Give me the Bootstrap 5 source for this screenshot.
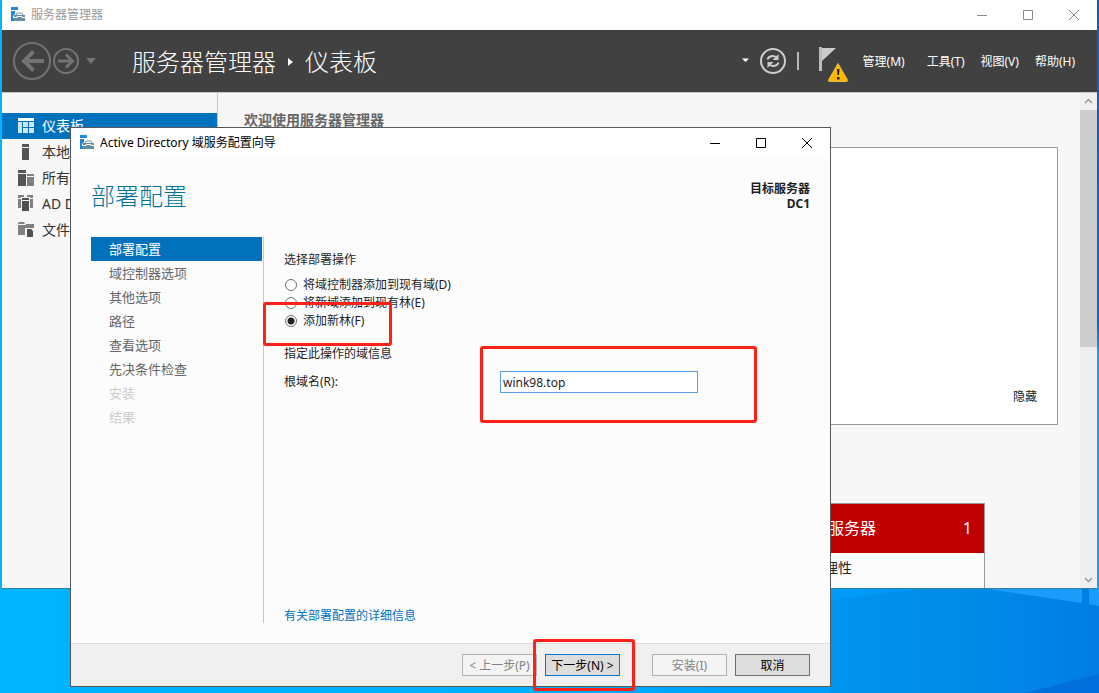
<!DOCTYPE html>
<html lang="zh-CN">
<head>
<meta charset="utf-8">
<meta name="viewport" content="width=device-width, initial-scale=1">
<title>服务器管理器</title>
<link href="https://cdn.jsdelivr.net/npm/bootstrap@5.3.0/dist/css/bootstrap.min.css" rel="stylesheet">
<style>
  body { font-family: "Noto Sans", "Noto Sans CJK SC", sans-serif; font-size: 12px; line-height: 18px; color: #222; }
  button, input { font: inherit; color: inherit; }
  svg { display: block; flex: none; }
  .desktop { height: 100vh; min-height: 693px; background: #00b4ff; }
  .wallpaper { position: absolute; inset: 0; width: 100%; height: 100%; }

  /* windows */
  .win-main { position: absolute; top: 0; left: 2px; right: 2px; bottom: 104px; background: #f7f7f7; border-bottom: 1px solid #2f7ea8; }
  .win-dialog { position: absolute; top: 127px; left: 70px; width: 761px; background: #fcfcfc; border: 1px solid #53585c; color: #1e1e1e; }
  .titlebar { height: 30px; background: #fff; padding-left: 8px; }
  .titlebar > span { padding-left: 5px; }
  .win-main .titlebar { color: #999; }
  .win-btn { width: 46px; height: 28px; border: 0; background: none; padding: 0; display: flex; align-items: center; justify-content: center; }

  /* header strip */
  .topstrip { height: 63px; background: #414141; color: #fff; border-bottom: 1px solid #c8c8c8; padding-left: 10px; padding-right: 22px; }
  .crumbs { font-size: 24px; font-weight: 300; line-height: 36px; margin-left: 34px; padding-top: 2px; gap: 12px; }
  .plain-btn { border: 0; background: none; padding: 0; }
  .topmenu { gap: 16px; margin-left: 13px; padding-top: 3px; }
  .topmenu .wide-gap { margin-right: 6px; }

  /* main window body */
  .sidebar { width: 216px; border-right: 1px solid #c9c9c9; padding-top: 20px; font-size: 14px; }
  .sidebar a { height: 26px; padding-left: 15px; gap: 8px; color: #333; text-decoration: none; display: flex; align-items: center; white-space: nowrap; overflow: hidden; }
  .sidebar a.active { background: #0072bc; color: #fff; }
  .dash { padding: 18px 22px 0 26px; }
  .dash h2 { font-size: 14px; line-height: 18px; font-weight: 700; color: #666; margin: 0 0 18px; }
  .welcome { height: 278px; background: #fff; border: 1px solid #999; padding: 0 20px 18px; margin-bottom: 78px; }
  .tile { width: 240px; margin-right: 73px; background: #fcfcfc; border: 1px solid #999; border-bottom: 0; }
  .tile-head { height: 49px; background: #c00000; color: #fff; font-size: 16px; padding: 0 12px 0 50px; }
  .tile-row { height: 36px; font-size: 14px; padding: 6px 50px 0; }
  .scrollrail { width: 17px; background: #efefef; }
  .scrollthumb { height: 237px; background: #cdcdcd; }
  .arrow-btn { width: 17px; height: 17px; border: 0; padding: 0; background: none; display: flex; align-items: center; justify-content: center; }

  /* wizard */
  .wiz-head { height: 79px; padding: 20px 20px 0; }
  .wiz-head h1 { font-size: 24px; line-height: 36px; font-weight: 300; color: #007298; margin: 0; }
  .target { font-weight: 700; line-height: 15px; padding-top: 3px; }
  .wiz-body { min-height: 386px; padding: 0 20px; margin-bottom: 20px; }
  .steps { width: 173px; border-right: 1px solid #c8c8c8; padding-right: 1px; font-size: 13px; }
  .steps a { height: 24px; line-height: 24px; padding-left: 18px; color: #666; text-decoration: none; display: block; }
  .steps a.active { background: #0072bc; color: #fff; }
  .steps a.off { color: #ccc; }
  .pane { padding: 14px 0 0 20px; }
  .opts { padding: 7px 0 15px; }
  .opt { height: 18px; gap: 5px; }
  .opt input { appearance: none; width: 12px; height: 12px; margin: 0 1px; border: 1px solid #707070; border-radius: 50%; background: #fff; }
  .opt input:checked { background: radial-gradient(circle, #222 3px, #fff 4px); }
  .field-row { padding-top: 8px; }
  .field-name { width: 216px; }
  .text-in { width: 198px; height: 22px; border: 1px solid #569de5; background: #fff; padding: 0 2px; outline: 0; border-radius: 0; }
  .more-row { line-height: 15px; }
  .more { color: #0070c0; text-decoration: none; }
  .wiz-foot { height: 43px; background: #f0f0f0; border-top: 1px solid #dcdcdc; padding: 0 20px; gap: 8px; }
  .cmd { width: 75px; height: 22px; line-height: 18px; padding: 2px 0 0; border: 1px solid #707070; background: #ddd; color: #000; white-space: nowrap; }
  .cmd:disabled { border-color: #adb2b5; background: #f4f4f4; color: #838383; }
  .cmd.main-cmd { border-color: #0078d7; }

  /* red callout frames */
  .callout-box { position: absolute; border: 3px solid #ff2116; border-radius: 3px; pointer-events: none; }
  .on-forest { left: -21px; top: -10px; width: 129px; height: 44px; }
  .on-domain { left: -20px; top: -25px; width: 277px; height: 77px; }
  .on-next { left: -12px; top: -15px; width: 102px; height: 52px; }
</style>
</head>
<body>
<div class="desktop position-relative overflow-hidden">
  <svg class="wallpaper" viewBox="0 0 1099 693" preserveAspectRatio="none" aria-hidden="true">
    <defs>
      <linearGradient id="sky" x1="0" x2="1" y1="0" y2="0"><stop offset="0" stop-color="#00b4ff"/><stop offset=".5" stop-color="#00b0fd"/><stop offset=".76" stop-color="#009cf8"/><stop offset="1" stop-color="#0088ee"/></linearGradient>
      <linearGradient id="edge" x1="0" x2="0" y1="0" y2="1"><stop offset="0" stop-color="#0a5fce"/><stop offset=".55" stop-color="#0068d8"/><stop offset=".6" stop-color="#1a9cf8"/><stop offset="1" stop-color="#1a9cf8"/></linearGradient>
      <linearGradient id="beam" x1="0" x2="1" y1="0" y2="0"><stop offset="0" stop-color="#0095ef"/><stop offset=".6" stop-color="#0089e8"/><stop offset="1" stop-color="#007ce2"/></linearGradient>
    </defs>
    <rect width="1099" height="693" fill="url(#sky)"/>
    <rect x="1090" width="9" height="589" fill="url(#edge)"/>
    <path d="M831 600L920 589H1099V693H831Z" fill="url(#beam)"/>
    <path d="M980 588H1082V603ZM1089 588H1099V606L1089 604Z" fill="#1c9cfa"/>
    <path d="M1025 693L1099 674V693Z" fill="#006fdc"/>
  </svg>

  <main class="win-main d-flex flex-column">
    <header class="titlebar d-flex align-items-center">
      <svg width="16" height="16" viewBox="0 0 16 16"><path d="M1 0h7v3H1zM1 4h4v10H1z" fill="#1d87d8"/><path d="M3 9l4-4h6l3 4v2H3z" fill="#fff"/><path d="M4 8h11v6H4z" fill="#688ba0"/><path d="M6 8l1-2h5l1 2" fill="none" stroke="#7698aa"/><path d="M4 10.500h3v-1h5v1h3" fill="none" stroke="#fff"/></svg>
      <span class="flex-grow-1">服务器管理器</span>
      <button class="win-btn" aria-label="最小化"><svg width="10" height="10"><path d="M0 5.500h10" stroke="#888"/></svg></button>
      <button class="win-btn" aria-label="最大化"><svg width="10" height="10"><path d="M.5.5h9v9h-9z" fill="none" stroke="#888"/></svg></button>
      <button class="win-btn" aria-label="关闭"><svg width="10" height="10"><path d="M0 0l10 10M10 0L0 10" stroke="#888"/></svg></button>
    </header>

    <div class="topstrip d-flex align-items-center">
      <button class="plain-btn" aria-label="后退"><svg width="40" height="40" viewBox="0 0 40 40" fill="none" stroke="#737373"><circle cx="20" cy="20" r="18" stroke-width="2"/><path d="M32 20H12" stroke-width="4"/><path d="M21.500 10.500L12 20l9.500 9.500" stroke-width="4"/></svg></button>
      <button class="plain-btn" aria-label="前进"><svg width="30" height="30" viewBox="0 0 30 30" fill="none" stroke="#737373"><circle cx="14" cy="15" r="12" stroke-width="2"/><path d="M6 15h14" stroke-width="3"/><path d="M14 8.500L20.500 15l-6.500 6.500" stroke-width="3"/></svg></button>
      <button class="plain-btn ms-1" aria-label="历史记录"><svg width="12" height="8"><path d="M0 1h10L5 7z" fill="#737373"/></svg></button>
      <div class="crumbs d-flex align-items-center flex-grow-1">
        <span>服务器管理器</span>
        <svg width="5" height="8"><path d="M0 0l5 4-5 4z" fill="#fff"/></svg>
        <span>仪表板</span>
      </div>
      <button class="plain-btn" aria-label="刷新选项"><svg width="8" height="5"><path d="M0 .5h7L3.500 4z" fill="#fff"/></svg></button>
      <button class="plain-btn ms-2" aria-label="刷新"><svg width="30" height="30" viewBox="0 0 30 30" fill="none" stroke="#ccc"><circle cx="15" cy="15" r="12" stroke-width="2"/><g stroke-width="2"><path d="M9.500 13.500c1-3.500 6-4.500 9-2"/><path d="M20.500 16.500c-1 3.500-6 4.500-9 2"/></g><path d="M20.500 8v6h-6zM9.500 22v-6h6z" fill="#ccc" stroke="none"/></svg></button>
      <svg class="ms-2" width="4" height="20"><path d="M2 1v18" stroke="#b8b8b8" stroke-width="2"/></svg>
      <button class="plain-btn ms-3 pt-1" aria-label="通知"><svg width="34" height="38" viewBox="0 0 34 38"><path d="M3 3h3v24H3z" fill="#bbb"/><path d="M6 4h14L6 17z" fill="#ccc"/><path d="M22 19.500L31.500 36a1 1 0 0 1-1 1.500h-17a1 1 0 0 1-1-1.500z" fill="#fdb900" stroke="#e8ba4a"/><path d="M21 25h2.500l-.5 6h-1.500zM21 33h2.500v2.500H21z" fill="#222"/></svg></button>
      <nav class="topmenu d-flex">
        <button class="plain-btn wide-gap">管理(M)</button>
        <button class="plain-btn">工具(T)</button>
        <button class="plain-btn">视图(V)</button>
        <button class="plain-btn">帮助(H)</button>
      </nav>
    </div>

    <div class="d-flex flex-grow-1 overflow-hidden">
      <nav class="sidebar flex-shrink-0">
        <a class="active" href="#"><svg width="17" height="16"><path d="M1 0h16v3H1z" fill="#fff"/><path d="M1 4h4v11H1zM6 4h5v5H6zM12 4h5v5h-5zM6 10h5v5H6zM12 10h5v5h-5z" fill="#cfe5f4"/></svg>仪表板</a>
        <a href="#"><svg width="17" height="16"><path d="M5 0h7v3H5zM5 4h7v12H5z" fill="#555"/></svg>本地服务器</a>
        <a href="#"><svg width="17" height="16"><path d="M1 0h8v3H1zM1 4h8v12H1z" fill="#555"/><path d="M10 4h7v2h-7zM10 7h7v9h-7z" fill="#808080"/></svg>所有服务器</a>
        <a href="#"><svg width="17" height="17"><path d="M1 0h6v3H1zM10 0h6v3h-6zM1 4h3v9H1zM13 4h3v9h-3z" fill="#808080"/><path d="M4 2h9v15H4z" fill="#f7f7f7"/><path d="M5 3h7v2H5zM5 6h7v10H5z" fill="#505050"/></svg>AD DS</a>
        <a href="#"><svg width="17" height="16"><path d="M1 1l1-1h5l1 2h-7zM1 3h8v2h8v1H8v7H1z" fill="#808080"/><path d="M9 2h8v3H9z" fill="#808080"/><path d="M9.500 6.500h5l2 3v6h-7z" fill="#505050" stroke="#f7f7f7"/></svg>文件和存储服务</a>
      </nav>
      <section class="dash flex-grow-1">
        <h2>欢迎使用服务器管理器</h2>
        <div class="welcome d-flex align-items-end justify-content-end"><button class="plain-btn">隐藏</button></div>
        <div class="d-flex justify-content-end">
          <article class="tile">
            <div class="tile-head d-flex align-items-center justify-content-between"><span>所有服务器</span><span>1</span></div>
            <div class="tile-row">可管理性</div>
          </article>
        </div>
      </section>
      <div class="scrollrail flex-shrink-0 d-flex flex-column">
        <button class="arrow-btn" aria-label="向上滚动"><svg width="9" height="6"><path d="M1 5l3.500-3.500L8 5" fill="none" stroke="#999" stroke-width="1.500"/></svg></button>
        <div class="scrollthumb"></div>
        <button class="arrow-btn mt-auto" aria-label="向下滚动"><svg width="9" height="6"><path d="M1 1l3.500 3.500L8 1" fill="none" stroke="#999" stroke-width="1.500"/></svg></button>
      </div>
    </div>
  </main>

  <section class="win-dialog" role="dialog" aria-labelledby="dlgTitle">
    <header class="titlebar d-flex align-items-center text-black">
      <svg width="16" height="16" viewBox="0 0 16 16"><path d="M1 0h7v3H1zM1 4h4v10H1z" fill="#1d87d8"/><path d="M3 9l4-4h6l3 4v2H3z" fill="#fff"/><path d="M4 8h11v6H4z" fill="#688ba0"/><path d="M6 8l1-2h5l1 2" fill="none" stroke="#7698aa"/><path d="M4 10.500h3v-1h5v1h3" fill="none" stroke="#fff"/></svg>
      <span id="dlgTitle" class="flex-grow-1">Active Directory 域服务配置向导</span>
      <button class="win-btn" aria-label="最小化"><svg width="10" height="10"><path d="M0 5.500h10" stroke="#000"/></svg></button>
      <button class="win-btn" aria-label="最大化"><svg width="10" height="10"><path d="M.5.5h9v9h-9z" fill="none" stroke="#000"/></svg></button>
      <button class="win-btn" aria-label="关闭"><svg width="10" height="10"><path d="M0 0l10 10M10 0L0 10" stroke="#000"/></svg></button>
    </header>
    <div class="wiz-head d-flex justify-content-between">
      <h1>部署配置</h1>
      <div class="target text-end">目标服务器<br>DC1</div>
    </div>
    <div class="wiz-body d-flex">
      <nav class="steps flex-shrink-0">
        <a class="active" href="#">部署配置</a>
        <a href="#">域控制器选项</a>
        <a href="#">其他选项</a>
        <a href="#">路径</a>
        <a href="#">查看选项</a>
        <a href="#">先决条件检查</a>
        <a class="off" href="#">安装</a>
        <a class="off" href="#">结果</a>
      </nav>
      <form class="pane flex-grow-1 d-flex flex-column">
        <div>选择部署操作</div>
        <div class="opts">
          <div class="opt d-flex align-items-center"><input type="radio" name="op" id="opD"><label for="opD">将域控制器添加到现有域(D)</label></div>
          <div class="opt d-flex align-items-center"><input type="radio" name="op" id="opE"><label for="opE">将新域添加到现有林(E)</label></div>
          <div class="opt d-flex align-items-center position-relative"><input type="radio" name="op" id="opF" checked><label for="opF">添加新林(F)</label><span class="callout-box on-forest"></span></div>
        </div>
        <div>指定此操作的域信息</div>
        <div class="field-row d-flex align-items-center">
          <label class="field-name" for="root">根域名(R):</label>
          <div class="position-relative d-flex"><input class="text-in" type="text" id="root" value="wink98.top"><span class="callout-box on-domain"></span></div>
        </div>
        <div class="more-row mt-auto"><a class="more" href="#">有关部署配置的详细信息</a></div>
      </form>
    </div>
    <footer class="wiz-foot d-flex align-items-center justify-content-end">
      <button class="cmd" disabled>&lt; 上一步(P)</button>
      <div class="position-relative d-flex me-4"><button class="cmd main-cmd">下一步(N) &gt;</button><span class="callout-box on-next"></span></div>
      <button class="cmd" disabled>安装(I)</button>
      <button class="cmd">取消</button>
    </footer>
  </section>
</div>
<script src="https://cdn.jsdelivr.net/npm/bootstrap@5.3.0/dist/js/bootstrap.bundle.min.js"></script>
</body>
</html>
